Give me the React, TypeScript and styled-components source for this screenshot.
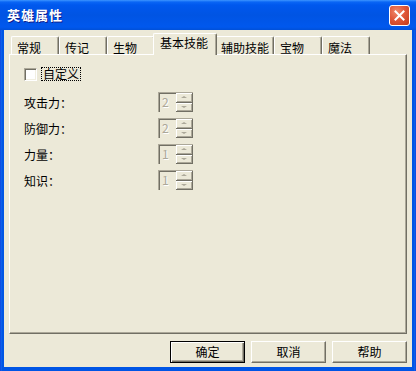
import React from "react";
import styled, { createGlobalStyle } from "styled-components";

const FONT = `"Noto Sans CJK SC", "Noto Sans", sans-serif`;

const GlobalStyle = createGlobalStyle`
  html, body { margin: 0; padding: 0; background: #ECE9D8; }
  body { font-family: ${FONT}; }
`;

const Window = styled.div`
  width: 416px;
  height: 371px;
  box-sizing: border-box;
  display: flex;
  flex-direction: column;
  background: linear-gradient(
    90deg,
    #0831d9 0,
    #166aee 1px,
    #0055e5 2px,
    #0055e5 calc(100% - 2px),
    #166aee calc(100% - 1px),
    #0831d9 100%
  );
  font-family: ${FONT};
  font-size: 12px;
  color: #000;
`;

const TitleBar = styled.div`
  height: 30px;
  flex: none;
  display: flex;
  align-items: center;
  padding: 0 6px 0 7px;
  box-sizing: border-box;
  background: linear-gradient(
    180deg,
    #3d95ff 0,
    #0a66f5 2px,
    #0058ee 5px,
    #0054e3 50%,
    #0058ee 90%,
    #0050d8 100%
  );
`;

const Title = styled.div`
  flex: 1;
  color: #fff;
  font-weight: 700;
  font-size: 13px;
  letter-spacing: 1px;
  line-height: 16px;
  text-shadow: 1px 1px 0 #0f1d8a;
`;

const CloseButton = styled.div`
  width: 21px;
  height: 21px;
  box-sizing: border-box;
  border: 1px solid #fff;
  border-radius: 3px;
  background: radial-gradient(circle at 35% 30%, #f08a6c 0, #e0583a 45%, #c23a1a 100%);
  display: grid;
  place-items: center;
`;

const Client = styled.div`
  flex: 1;
  margin: 0 4px 4px 4px;
  background: #ece9d8;
  padding: 0 5px 4px 5px;
  display: flex;
  flex-direction: column;
`;

const TabStrip = styled.div`
  height: 24px;
  flex: none;
  display: flex;
  align-items: flex-end;
  padding-left: 2px;
  position: relative;
  z-index: 1;
`;

const Tab = styled.div<{ $w: number; $active?: boolean }>`
  box-sizing: border-box;
  width: ${(p) => (p.$active ? p.$w + 4 : p.$w)}px;
  height: ${(p) => (p.$active ? 22 : 18)}px;
  margin: ${(p) => (p.$active ? "0 -2px -1px -2px" : "0")};
  padding: ${(p) => (p.$active ? "2px 0 0 6px" : "4px 0 0 5px")};
  background: #ece9d8;
  border-top: 1px solid #fff;
  border-left: 1px solid #fff;
  border-right: 1px solid #716f64;
  border-radius: 2px 2px 0 0;
  box-shadow: inset -1px 0 0 #aca899;
  line-height: 14px;
  white-space: nowrap;
  position: relative;
  z-index: ${(p) => (p.$active ? 2 : 1)};
`;

const Panel = styled.div`
  height: 280px;
  flex: none;
  box-sizing: border-box;
  border: 1px solid;
  border-color: #fff #716f64 #716f64 #fff;
  box-shadow: inset -1px -1px 0 #aca899;
  padding: 12px 0 0 14px;
  display: flex;
  flex-direction: column;
`;

const CheckRow = styled.div`
  height: 14px;
  display: flex;
  align-items: center;
  gap: 4px;
`;

const CheckBox = styled.div`
  width: 13px;
  height: 13px;
  box-sizing: border-box;
  border: 1px solid;
  border-color: #aca899 #fff #fff #aca899;
  box-shadow: inset 1px 1px 0 #716f64, inset -1px -1px 0 #f1efe2;
  background: #fff;
`;

const FocusLabel = styled.span`
  border: 1px dotted #000;
  padding: 0 1px;
  line-height: 12px;
`;

const Form = styled.div`
  margin-top: 11px;
  display: grid;
  grid-template-columns: 134px auto;
  grid-auto-rows: 20px;
  row-gap: 6px;
  align-items: center;
`;

const FieldLabel = styled.div`
  line-height: 20px;
  padding-top: 1px;
`;

const Spin = styled.div`
  display: flex;
  width: 35px;
  height: 20px;
  box-sizing: border-box;
  border-top: 1px solid #aca899;
  border-left: 1px solid #aca899;
  box-shadow: inset 1px 1px 0 #716f64;
`;

const SpinEdit = styled.div`
  width: 17px;
  padding: 1px 0 0 3px;
  box-sizing: border-box;
  color: #aca899;
  text-shadow: 1px 1px 0 #fff;
  line-height: 16px;
`;

const SpinButtons = styled.div`
  flex: 1;
  display: flex;
  flex-direction: column;
`;

const SpinBtn = styled.div<{ $up?: boolean }>`
  flex: 1;
  box-sizing: border-box;
  border-right: 1px solid #716f64;
  border-bottom: 1px solid #716f64;
  box-shadow: inset 1px 1px 0 #fff, inset -1px -1px 0 #aca899;
  display: grid;
  place-items: center;
  &::after {
    content: "";
    width: 0;
    height: 0;
    border-left: 3px solid transparent;
    border-right: 3px solid transparent;
    ${(p) =>
      p.$up
        ? "border-bottom: 2px solid #aca899;"
        : "border-top: 2px solid #aca899;"}
  }
`;

const ButtonRow = styled.div`
  margin-top: 7px;
  display: flex;
  justify-content: flex-end;
  gap: 6px;
`;

const Button = styled.button<{ $default?: boolean }>`
  width: 75px;
  height: 22px;
  box-sizing: border-box;
  padding: 0;
  font-family: ${FONT};
  font-size: 12px;
  line-height: 14px;
  color: #000;
  background: #ece9d8;
  border: 1px solid;
  border-color: ${(p) => (p.$default ? "#000" : "#fff #716f64 #716f64 #fff")};
  box-shadow: ${(p) =>
    p.$default
      ? "inset 1px 1px 0 #fff, inset -1px -1px 0 #716f64, inset -2px -2px 0 #aca899"
      : "inset -1px -1px 0 #aca899"};
`;

const tabs = [
  { label: "常规", w: 48 },
  { label: "传记", w: 48 },
  { label: "生物", w: 48 },
  { label: "基本技能", w: 60, active: true },
  { label: "辅助技能", w: 59 },
  { label: "宝物", w: 48 },
  { label: "魔法", w: 48 },
];

const fields = [
  { label: "攻击力：", value: "2" },
  { label: "防御力：", value: "2" },
  { label: "力量：", value: "1" },
  { label: "知识：", value: "1" },
];

export default function App() {
  return (
    <>
      <GlobalStyle />
      <Window>
        <TitleBar>
          <Title>英雄属性</Title>
          <CloseButton>
            <svg width="11" height="11" viewBox="0 0 11 11">
              <path d="M1.5 1.5 L9.5 9.5 M9.5 1.5 L1.5 9.5" stroke="#fff" strokeWidth="2" strokeLinecap="square" />
            </svg>
          </CloseButton>
        </TitleBar>
        <Client>
          <TabStrip>
            {tabs.map((t) => (
              <Tab key={t.label} $w={t.w} $active={t.active}>
                {t.label}
              </Tab>
            ))}
          </TabStrip>
          <Panel>
            <CheckRow>
              <CheckBox />
              <FocusLabel>自定义</FocusLabel>
            </CheckRow>
            <Form>
              {fields.map((f) => (
                <React.Fragment key={f.label}>
                  <FieldLabel>{f.label}</FieldLabel>
                  <Spin>
                    <SpinEdit>{f.value}</SpinEdit>
                    <SpinButtons>
                      <SpinBtn $up />
                      <SpinBtn />
                    </SpinButtons>
                  </Spin>
                </React.Fragment>
              ))}
            </Form>
          </Panel>
          <ButtonRow>
            <Button $default>确定</Button>
            <Button>取消</Button>
            <Button>帮助</Button>
          </ButtonRow>
        </Client>
      </Window>
    </>
  );
}
